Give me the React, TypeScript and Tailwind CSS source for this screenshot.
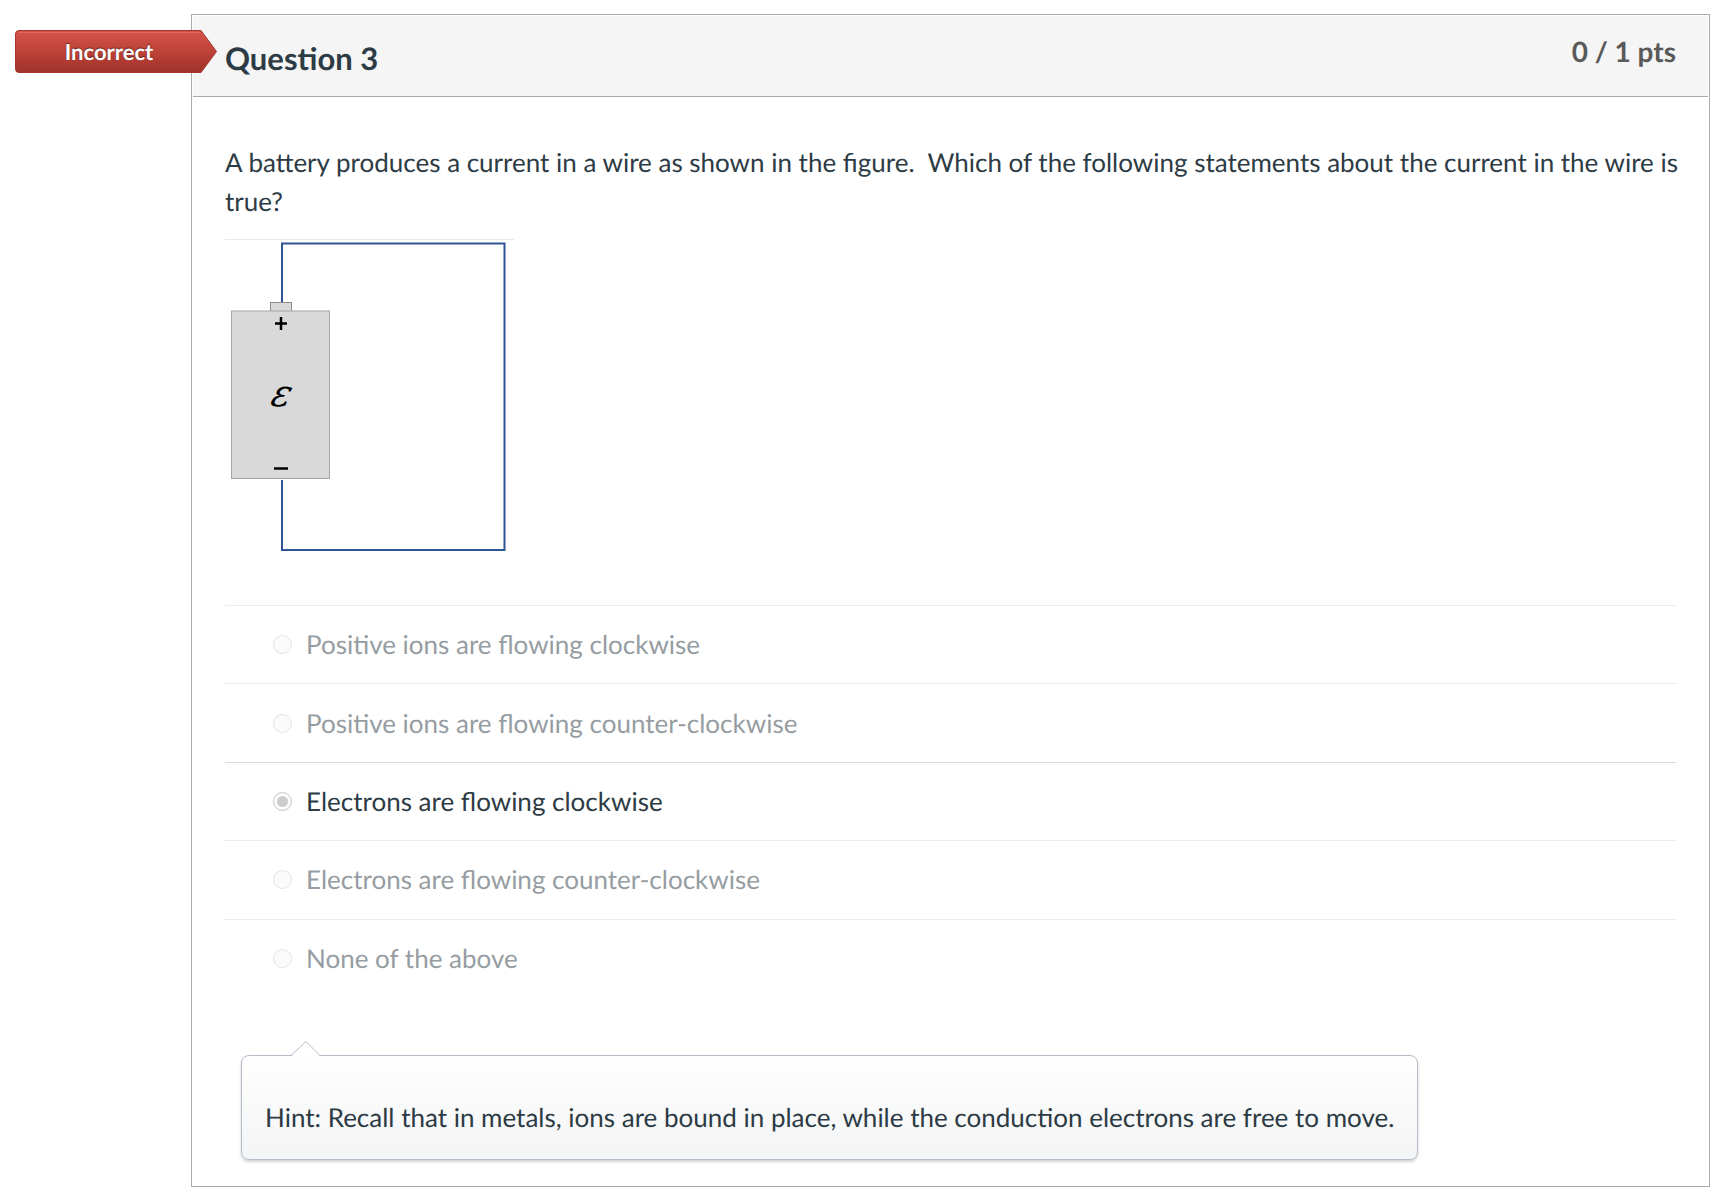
const answers = [
  { id: "ions-cw", text: "Positive ions are flowing clockwise", selected: false },
  { id: "ions-ccw", text: "Positive ions are flowing counter-clockwise", selected: false },
  { id: "electrons-cw", text: "Electrons are flowing clockwise", selected: true },
  { id: "electrons-ccw", text: "Electrons are flowing counter-clockwise", selected: false },
  { id: "none", text: "None of the above", selected: false },
];

const question =
  "A battery produces a current in a wire as shown in the figure.\u00a0 Which of the following statements about the current in the wire is true?";

function IncorrectFlag() {
  return (
    <div className="absolute top-[15px] -left-[177px] h-[43px] w-[202px]">
      <svg className="absolute inset-0 h-full w-full" viewBox="0 0 202 43" aria-hidden="true">
        <defs>
          <linearGradient id="flag" x1="0" y1="0" x2="0" y2="1">
            <stop offset="0" stopColor="#d5544a" />
            <stop offset="0.5" stopColor="#bd4238" />
            <stop offset="1" stopColor="#a0322a" />
          </linearGradient>
        </defs>
        <path
          d="M4 .5H186L201.500 21.500 186 42.500H4A3.500 3.500 0 0 1 .5 39V4A3.500 3.500 0 0 1 4 .5Z"
          fill="url(#flag)"
          stroke="#a5352d"
        />
        <path d="M3 2.500H185.500" stroke="#df6b62" />
      </svg>
      <span className="relative flex h-full items-center justify-center pr-[14px] text-[22px] font-bold text-white [text-shadow:0_-1px_1px_rgba(0,0,0,0.5)]">
        Incorrect
      </span>
    </div>
  );
}

function CircuitFigure() {
  return (
    <svg width="289" height="320" viewBox="0 0 289 320" role="img" aria-label="Battery connected to a wire loop">
      <path d="M0 .5H289" stroke="#efe6f0" />
      <path d="M57 64V4.500H279.500V311H57V241" fill="none" stroke="#2f5597" strokeWidth="2" />
      <rect x="45.500" y="63.500" width="21" height="9" fill="#d9d9d9" stroke="#8c8c8c" />
      <rect x="6.500" y="72" width="98" height="167.500" fill="#d9d9d9" stroke="#a6a6a6" />
      <path d="M50 84.500H62M56 78V91M49 229.500H63" stroke="#000" strokeWidth="2.500" />
      <text
        x="54"
        y="167"
        textAnchor="middle"
        className="fill-black font-['DejaVu_Math_TeX_Gyre','DejaVu_Serif',serif] text-[37px] italic"
      >
        𝜀
      </text>
    </svg>
  );
}

export default function App() {
  return (
    <main className="pt-[14px] pr-[12px] pb-4 pl-[191px] font-['Lato',sans-serif] text-[26px] leading-[39px] text-[#2d3b45] [text-rendering:geometricPrecision]">
      <section className="relative border border-[#aaaaaa] bg-white">
        <IncorrectFlag />
        <header className="mx-px mt-px flex h-[81px] justify-between border-b border-[#aaaaaa] bg-[#f5f5f5] px-8">
          <h1 className="pt-[23px] text-[31px] font-bold">Question 3</h1>
          <span className="pt-4 text-[28px] font-bold text-[#595959]">0 / 1 pts</span>
        </header>
        <div className="px-[33px] pt-[46px] pb-[26px]">
          <p className="-mr-6">{question}</p>
          <div className="mt-[18px] mb-[46px]">
            <CircuitFigure />
          </div>
          <fieldset>
            <div className="grid min-h-[392px] auto-rows-fr">
              {answers.map((answer) => (
                <label
                  key={answer.id}
                  htmlFor={answer.id}
                  className={
                    answer.selected
                      ? "flex items-center gap-[14px] border-t border-[#d8dadc] pl-12"
                      : "flex items-center gap-[14px] border-t border-[#ebecee] pl-12 text-[#969da2]"
                  }
                >
                  <input
                    type="radio"
                    id={answer.id}
                    name="answer"
                    defaultChecked={answer.selected}
                    disabled
                    className="grid size-[19px] appearance-none place-items-center rounded-full border border-[#e3e3e3] bg-[#fbfbfb] before:size-[11px] before:rounded-full checked:border-[#c8c8c8] checked:before:bg-[#cccccc]"
                  />
                  {answer.text}
                </label>
              ))}
            </div>
          </fieldset>
          <div className="relative mt-[58px] ml-4 w-fit rounded-lg border border-[#b5bec8] bg-linear-to-b from-white to-[#f3f4f5] px-[23px] pt-[42px] pb-[22px] shadow-[0_2px_3px_rgba(0,0,0,0.18)]">
            <svg className="absolute -top-[16px] left-[49px]" width="32" height="17" viewBox="0 0 32 17" aria-hidden="true">
              <path d="M1 16 15 1.500 29 16V17H1Z" fill="#fff" />
              <path d="M0 15.500 15 1.500 29 15.500" fill="none" stroke="#b5bec8" />
            </svg>
            <p>Hint: Recall that in metals, ions are bound in place, while the conduction electrons are free to move.</p>
          </div>
        </div>
      </section>
    </main>
  );
}
